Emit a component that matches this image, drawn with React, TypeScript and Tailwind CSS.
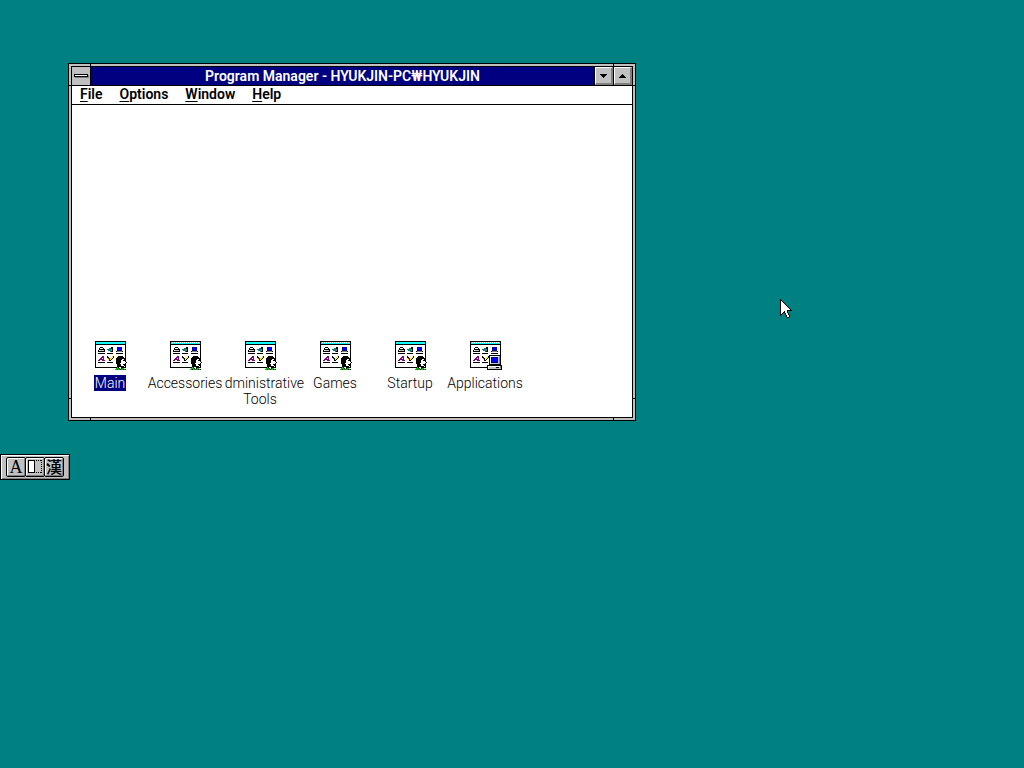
import React from 'react';

const COLORS: Record<string, string> = {
  k: '#000000',
  w: '#ffffff',
  c: '#00ffff',
  t: '#008080',
  b: '#0000ff',
  n: '#000080',
  m: '#800080',
  y: '#ffff00',
  r: '#ff0000',
  l: '#00c000',
  g: '#c0c0c0',
  d: '#808080',
};

interface PixelsProps {
  rows: string[];
  x?: number;
  y?: number;
}

// Draws a bitmap, one rect for each run of equal pixels. A dot is transparent.
const Pixels: React.FC<PixelsProps> = ({ rows, x = 0, y = 0 }) => (
  <g shapeRendering="crispEdges">
    {rows.map((row, j) =>
      [...row.matchAll(/([a-z])\1*/g)].map(run => (
        <rect
          key={`${j}-${run.index}`}
          x={x + run.index}
          y={y + j}
          width={run[0].length}
          height={1}
          fill={COLORS[run[1]]}
        />
      ))
    )}
  </g>
);

const PRINTER = ['..kkk..', '.kwwwk.', '.kkkkkk', 'kwggggk', 'kkkkkkk', '.......', 'kkkkkkk'];
const SPEAKER = ['....kk', '..ttkk', 'ttttdk', '.tttdk', '...tkk', '......', 'kkkkkk'];
const MONITOR = ['.nbbbn.', '.nbbbn.', '.nbbbn.', '.nnnnn.', 'kdddddk', '.......', 'kkkkkkk'];
const LETTER = ['....mm.', '...mmm.', '..mm.m.', '.mmmmm.', 'mm..mmm', '.......', 'kkkkkkk'];
const PENCIL = ['k....yk', 'kk..yyk', '.rkyyk.', '.ykyk..', '..kk...', '.......', 'kkkkkk.'];

const PERSON = [
  '...kkkkk....',
  '..kkkkkkk...',
  '.kkkkkkkkk..',
  '.kkkkkkwwk..',
  '.kkkkkwwkk..',
  '.kkkkkwwwwk.',
  '.kkkkkwwwwwk',
  '.kkkkwwwwwk.',
  '..kkkkwwkk..',
  '..kkkkwwwk..',
  '..kkkkkkk...',
  '..lkwwk.....',
  '.lllkwkll...',
  'llkllkllklk.',
];

const COMPUTER = [
  '..kkkkkkkkkkkk.',
  '..kwwwwwwwwwdk.',
  '..kwnnnnnnngdk.',
  '..kwnbbbbbbgdk.',
  '..kwnbbbbbbgdk.',
  '..kwnbbbbbbgdk.',
  '..kwnbbbbbbgdk.',
  '..kwnnnnnnngdk.',
  '..kwggggggggdk.',
  '..kkkkkkkkkkkk.',
  'kkkkkkkkkkkkkkk',
  'kwwwwwwwwwwwwdk',
  'kwgggggggkkkgdk',
  'kwggggggggggggk',
  'kkkkkkkkkkkkkkk',
];

const CURSOR = [
  'k...........',
  'kk..........',
  'kwk.........',
  'kwwk........',
  'kwwwk.......',
  'kwwwwk......',
  'kwwwwwk.....',
  'kwwwwwwk....',
  'kwwwwwwwk...',
  'kwwwwwwwwk..',
  'kwwwwwwwwwk.',
  'kwwwwwwkkkkk',
  'kwwwkwwk....',
  'kwwkkwwk....',
  'kwk..kwwk...',
  'kk...kwwk...',
  'k.....kwwk..',
  '......kwwk..',
  '.......kk...',
];

const DOWN = ['kkkkkkk', '.kkkkk.', '..kkk..', '...k...'];
const UP = [...DOWN].reverse();

// group window with a dithered caption strip
const FRAME = [
  'k'.repeat(31),
  'k' + 'cw'.repeat(14) + 'ck',
  'k' + 'c'.repeat(29) + 'k',
  'k'.repeat(31),
  ...Array.from({ length: 22 }, () => 'k' + 'w'.repeat(29) + 'k'),
  'k'.repeat(31),
];

const GroupIcon: React.FC<{ badge: 'person' | 'computer' }> = ({ badge }) => (
  <svg width="30" height="30" viewBox="0 0 30 30" className="overflow-visible shrink-0" aria-hidden="true">
    <Pixels rows={FRAME} />
    <Pixels rows={PRINTER} x={3} y={6} />
    <Pixels rows={SPEAKER} x={12} y={6} />
    <Pixels rows={MONITOR} x={21} y={6} />
    <Pixels rows={LETTER} x={3} y={15} />
    <Pixels rows={PENCIL} x={12} y={15} />
    {badge === 'person' ? <Pixels rows={PERSON} x={20} y={15} /> : <Pixels rows={COMPUTER} x={17} y={14} />}
  </svg>
);

interface Group {
  name: string;
  badge: 'person' | 'computer';
  label: string;
}

const GROUPS: Group[] = [
  { name: 'Main', badge: 'person', label: 'bg-[#000080] text-white px-px' },
  { name: 'Accessories', badge: 'person', label: 'relative z-10 bg-white px-[3px]' },
  { name: 'Administrative\nTools', badge: 'person', label: '' },
  { name: 'Games', badge: 'person', label: '' },
  { name: 'Startup', badge: 'person', label: '' },
  { name: 'Applications', badge: 'computer', label: '' },
];

const MENUS = ['File', 'Options', 'Window', 'Help'];

const CaptionButton: React.FC<{ label: string; rows: string[] }> = ({ label, rows }) => (
  <button
    aria-label={label}
    className="w-[19px] border-l border-black bg-[#c0c0c0]"
  >
    <span className="flex h-full items-center justify-center border-t border-l border-r-2 border-b-2 border-t-white border-l-white border-r-[#808080] border-b-[#808080]">
      <svg width="7" height="4" viewBox="0 0 7 4">
        <Pixels rows={rows} />
      </svg>
    </span>
  </button>
);

// Short lines across the sizing frame that mark off its corners
const FrameNotches = () => (
  <>
    <i className="absolute top-0 left-[21px] w-px h-[2px] bg-black" />
    <i className="absolute top-0 right-[21px] w-px h-[2px] bg-black" />
    <i className="absolute bottom-0 left-[21px] w-px h-[2px] bg-black" />
    <i className="absolute bottom-0 right-[21px] w-px h-[2px] bg-black" />
    <i className="absolute left-0 top-[21px] w-[2px] h-px bg-black" />
    <i className="absolute right-0 top-[21px] w-[2px] h-px bg-black" />
    <i className="absolute left-0 bottom-[21px] w-[2px] h-px bg-black" />
    <i className="absolute right-0 bottom-[21px] w-[2px] h-px bg-black" />
  </>
);

const ProgramManager = () => (
  <section className="relative w-full max-w-[568px] border border-black bg-[#c0c0c0] p-[2px]">
    <FrameNotches />
    <div className="border border-black bg-white">
      <header className="flex h-[19px] border-b border-black bg-[#000080]">
        <button
          aria-label="Control menu"
          className="flex w-[19px] items-center justify-center border-r border-black bg-[#c0c0c0]"
        >
          <span className="mb-px h-[3px] w-[14px] border border-black bg-white shadow-[1px_1px_0_#808080]" />
        </button>
        <h1 className="flex-1 text-center text-[14px] leading-[18px] font-semibold text-white whitespace-nowrap">
          Program Manager - HYUKJIN-PC₩HYUKJIN
        </h1>
        <CaptionButton label="Minimize" rows={DOWN} />
        <CaptionButton label="Maximize" rows={UP} />
      </header>
      <nav className="flex h-[19px] gap-px border-b border-black">
        {MENUS.map(menu => (
          <button key={menu} className="px-2 pb-[2px] text-[14px] leading-4 font-semibold">
            <span className="underline underline-offset-2">{menu[0]}</span>
            {menu.slice(1)}
          </button>
        ))}
      </nav>
      <div className="flex min-h-[312px] items-end pb-[10px] pl-px">
        <div className="flex items-stretch gap-px">
          {GROUPS.map(group => (
            <button key={group.name} className="flex w-[74px] flex-col items-center gap-1">
              <GroupIcon badge={group.badge} />
              <span className={`text-[14px] leading-4 font-light whitespace-pre ${group.label}`}>{group.name}</span>
            </button>
          ))}
        </div>
      </div>
    </div>
  </section>
);

const imeButton =
  'flex h-5 w-5 items-center justify-center rounded-[2px] border border-black bg-[#c0c0c0] shadow-[inset_1px_1px_0_#fff,inset_-1px_-1px_0_#808080]';

const InputBar = () => (
  <div className="flex w-fit border border-black bg-[#c0c0c0] py-[2px] px-[5px] shadow-[inset_1px_1px_0_#fff,inset_-1px_-1px_0_#808080]">
    <button aria-label="English" className={imeButton}>
      <span className="font-['Liberation_Serif',serif] text-[18px] leading-none">A</span>
    </button>
    <button aria-label="Half width" className={`${imeButton} -ml-px`}>
      <svg width="14" height="14" viewBox="0 0 14 14" shapeRendering="crispEdges">
        <rect x="0.5" y="0.5" width="6" height="12" fill="#fff" stroke="#000" />
        <path d="M8 0.5h6M8 12.5h6M13.5 0v13" stroke="#000" strokeDasharray="1 1" fill="none" />
      </svg>
    </button>
    <button aria-label="Hanja" className={`${imeButton} -ml-px`}>
      <span className="pb-[2px] font-['Noto_Sans_CJK_KR',sans-serif] text-[16px] leading-none font-medium">漢</span>
    </button>
  </div>
);

export default function App() {
  return (
    <main className="relative min-h-screen bg-[#008080] pt-[63px] font-['Roboto','Liberation_Sans',sans-serif] text-black">
      <div className="pl-[68px]">
        <ProgramManager />
      </div>
      <div className="pt-[33px]">
        <InputBar />
      </div>
      <svg
        className="pointer-events-none absolute top-[299px] left-[780px]"
        width="12"
        height="19"
        viewBox="0 0 12 19"
        aria-hidden="true"
      >
        <Pixels rows={CURSOR} />
      </svg>
    </main>
  );
}
